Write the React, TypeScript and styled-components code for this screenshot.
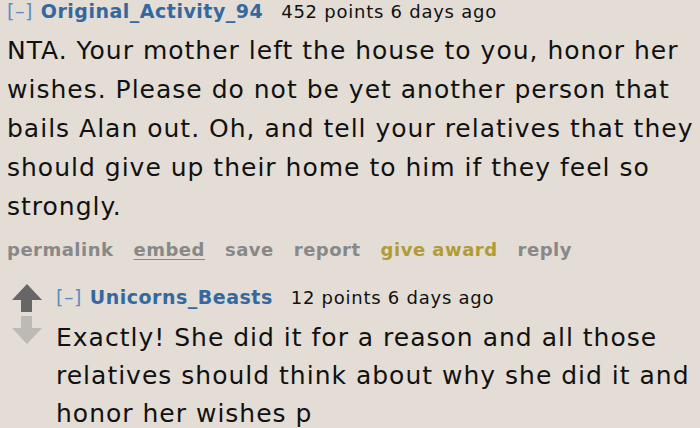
import React from "react";
import styled, { createGlobalStyle } from "styled-components";

const Global = createGlobalStyle`
  html, body { margin: 0; padding: 0; background: #e3ddd5; }
  body { font-family: "DejaVu Sans", Verdana, sans-serif; color: #111; }
`;

const Page = styled.div`
  width: 700px;
  height: 428px;
  overflow: hidden;
  padding-left: 7px;
  box-sizing: border-box;
  background: #e3ddd5;
`;

const Tagline = styled.div`
  display: flex;
  align-items: baseline;
  font-size: 19px;
  line-height: 22px;
  white-space: nowrap;
`;

const Toggle = styled.span`
  color: #5d8cc3;
  margin-right: 8px;
  letter-spacing: 0.5px;
`;

const Author = styled.span`
  color: #34689f;
  font-weight: bold;
  margin-right: 18px;
  letter-spacing: 0.5px;
`;

const Score = styled.span`
  color: #111;
  font-size: 18px;
  letter-spacing: 0.75px;
`;

const Body = styled.div<{ $top: number; $lh: number }>`
  margin-top: ${(p) => p.$top}px;
  font-size: 25px;
  line-height: ${(p) => p.$lh}px;
  letter-spacing: 1px;
  color: #111;
  padding-right: 6px;
`;

const Buttons = styled.ul`
  list-style: none;
  margin: 13px 0 0;
  padding: 0;
  display: flex;
  gap: 20px;
  font-size: 18px;
  line-height: 22px;
  font-weight: bold;
  letter-spacing: 0.5px;
`;

const Btn = styled.li<{ $gold?: boolean; $underline?: boolean }>`
  color: ${(p) => (p.$gold ? "#b09b36" : "#888")};
  text-decoration: ${(p) => (p.$underline ? "underline" : "none")};
  text-underline-offset: 3px;
`;

const Child = styled.div`
  display: flex;
  margin-top: 25px;
  margin-left: 5px;
`;

const Votes = styled.div`
  width: 30px;
  display: flex;
  flex-direction: column;
  gap: 4px;
  margin-top: -2px;
  margin-right: 14px;
`;

const Entry = styled.div`
  flex: 1;
`;

const Arrow = ({ down, color }: { down?: boolean; color: string }) => (
  <svg width="30" height="28" viewBox="0 0 30 28" style={down ? { transform: "scaleY(-1)" } : undefined}>
    <polygon points="15,0 30,16 20,16 20,28 9,28 9,16 0,16" fill={color} />
  </svg>
);

export default function App() {
  return (
    <Page>
      <Global />
      <Tagline>
        <Toggle>[–]</Toggle>
        <Author>Original_Activity_94</Author>
        <Score>452 points 6 days ago</Score>
      </Tagline>
      <Body $top={8} $lh={39}>
        NTA. Your mother left the house to you, honor her wishes. Please do not be yet another person that
        bails Alan out. Oh, and tell your relatives that they should give up their home to him if they feel so
        strongly.
      </Body>
      <Buttons>
        <Btn>permalink</Btn>
        <Btn $underline>embed</Btn>
        <Btn>save</Btn>
        <Btn>report</Btn>
        <Btn $gold>give award</Btn>
        <Btn>reply</Btn>
      </Buttons>
      <Child>
        <Votes>
          <Arrow color="#666" />
          <Arrow down color="#bdb9b5" />
        </Votes>
        <Entry>
          <Tagline>
            <Toggle>[–]</Toggle>
            <Author>Unicorns_Beasts</Author>
            <Score>12 points 6 days ago</Score>
          </Tagline>
          <Body $top={10} $lh={38}>
            Exactly! She did it for a reason and all those relatives should think about why she did it and
            honor her wishes p
          </Body>
        </Entry>
      </Child>
    </Page>
  );
}
